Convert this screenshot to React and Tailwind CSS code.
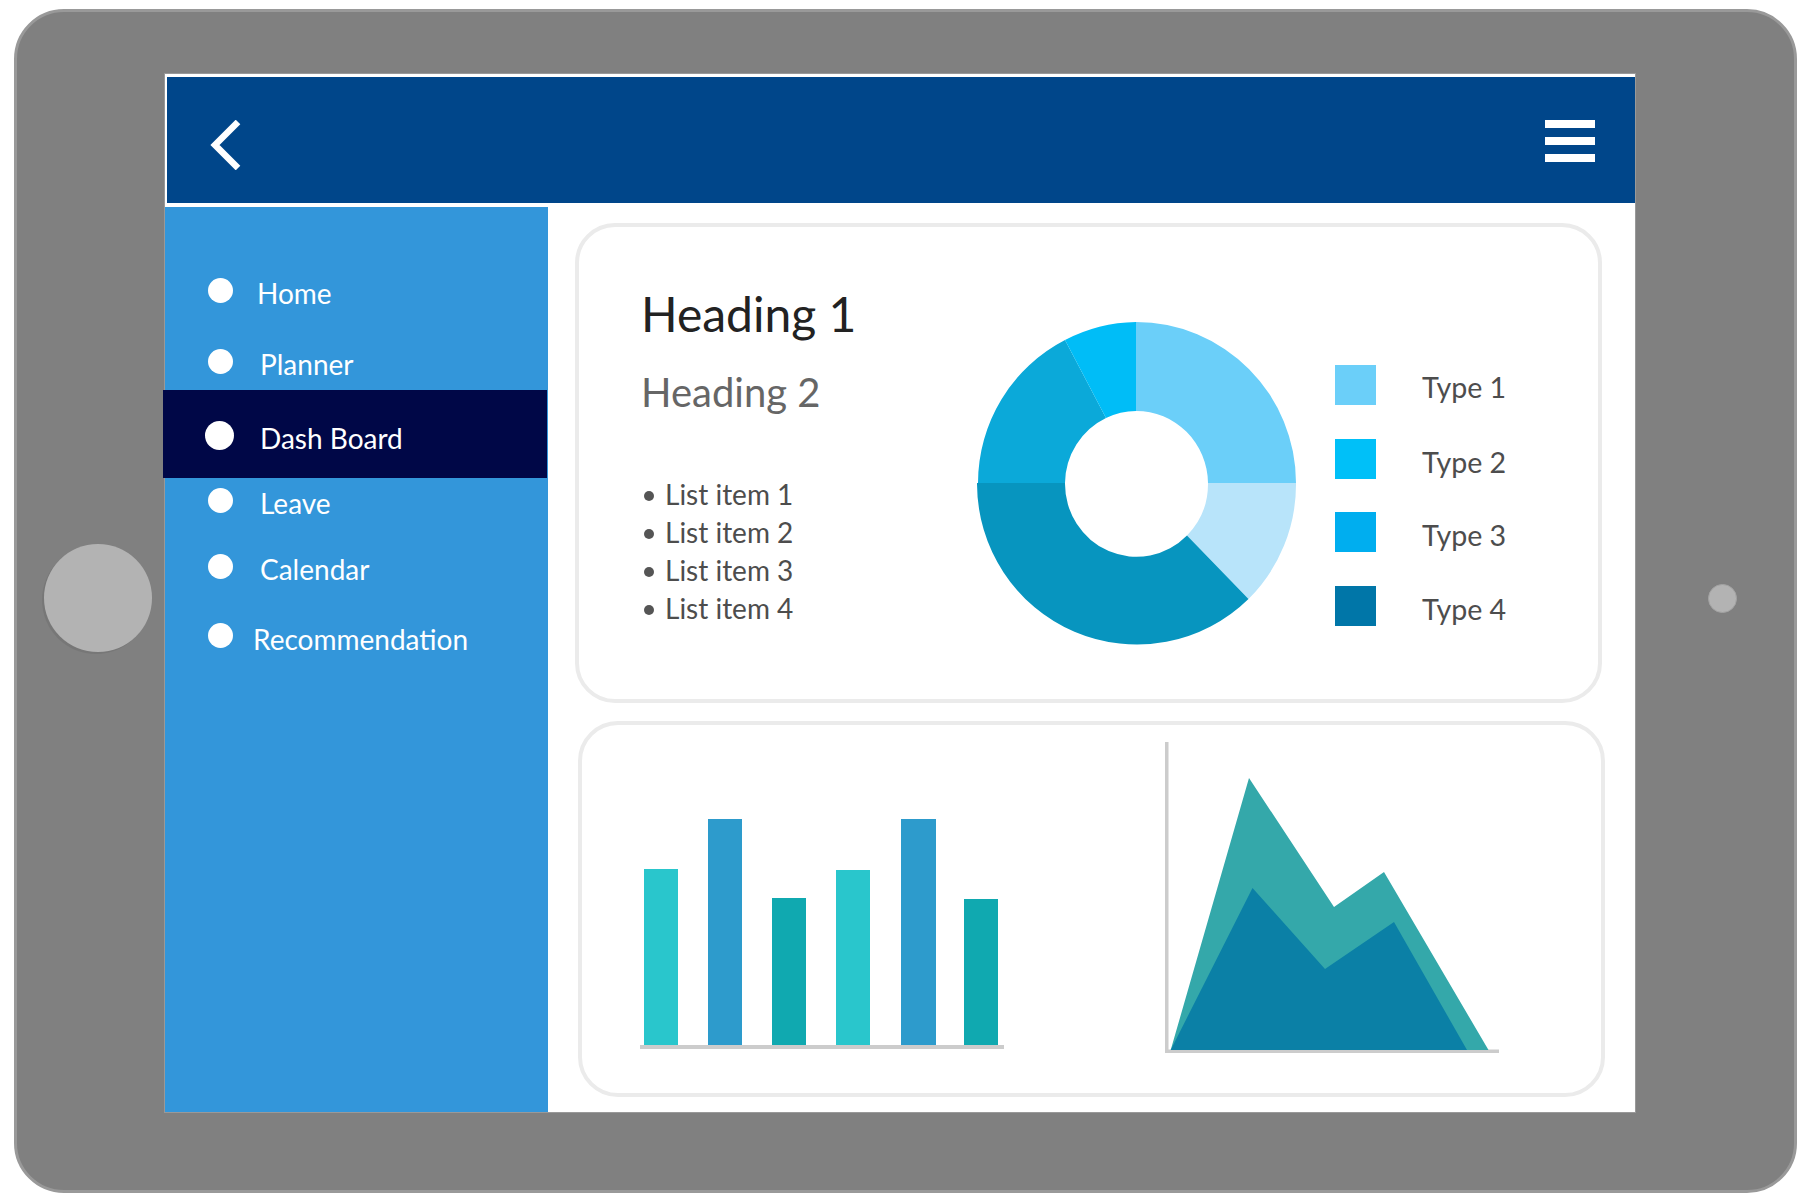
const font = { fontFamily: '"Lato", "Noto Sans", sans-serif' };

const navItems = [
  { label: 'Home', row: 'mt-[69px]', dot: 'mt-[2px]', text: 'ml-[24px]' },
  { label: 'Planner', row: 'mt-[37px]', dot: 'mt-[2px]', text: 'ml-[27px]' },
];
const navItemsAfter = [
  { label: 'Leave', row: 'mt-[8px]', dot: 'mt-[2px]', text: 'ml-[27px]' },
  { label: 'Calendar', row: 'mt-[32px]', dot: 'mt-[2px]', text: 'ml-[27px]' },
  { label: 'Recommendation', row: 'mt-[36px]', dot: 'mt-[1px]', text: 'ml-[20px]' },
];

function NavRow({ item }) {
  return (
    <div className={`${item.row} flex items-start pl-[43px] h-[34px]`}>
      <div className={`${item.dot} w-[25px] h-[25px] rounded-full bg-white shrink-0`} />
      <span className={`${item.text} text-[28px] leading-[34px] text-white`}>{item.label}</span>
    </div>
  );
}

function Sidebar() {
  return (
    <aside className="w-[383px] shrink-0 bg-[#3396da] mt-[4px]">
      {navItems.map((i) => <NavRow key={i.label} item={i} />)}
      <div className="mt-[9px] -ml-[2px] mr-[1px] h-[88px] bg-[#000747] pt-[31px] pl-[42px] flex items-start">
        <div className="w-[29px] h-[29px] rounded-full bg-white shrink-0" />
        <span className="ml-[26px] text-[28px] leading-[34px] text-white">Dash Board</span>
      </div>
      {navItemsAfter.map((i) => <NavRow key={i.label} item={i} />)}
    </aside>
  );
}

function Donut() {
  return (
    <svg className="mt-[94px] shrink-0" width="320" height="324" viewBox="977 321 320 324">
      <path fill="#6bcff9" d="M1136,322 A160 161 0 0 1 1296,483 L1208,483 A71.5 73 0 0 0 1136,411 Z" />
      <path fill="#b8e4fa" d="M1296,483 A160 161 0 0 1 1248.5,599 L1187,535.5 A71.5 73 0 0 0 1208,483 Z" />
      <path fill="#0795bf" d="M1248.5,599 A160 161 0 0 1 977,483 L1065,483 A71.5 73 0 0 0 1187,535.5 Z" />
      <path fill="#0ba9d9" d="M978,483 A160 161 0 0 1 1065,340 L1106,418 A71.5 73 0 0 0 1065,483 Z" />
      <path fill="#00bdf7" d="M1065,340 A160 161 0 0 1 1136,322 L1136,411 A71.5 73 0 0 0 1106,418 Z" />
    </svg>
  );
}

const legend = [
  { label: 'Type 1', color: 'bg-[#6bcff9]', row: 'mt-0', text: 'mt-[5px]' },
  { label: 'Type 2', color: 'bg-[#00c0f8]', row: 'mt-[34px]', text: 'mt-[6px]' },
  { label: 'Type 3', color: 'bg-[#00aeef]', row: 'mt-[33px]', text: 'mt-[6px]' },
  { label: 'Type 4', color: 'bg-[#0076a8]', row: 'mt-[34px]', text: 'mt-[6px]' },
];

function Legend() {
  return (
    <div className="ml-[38px] mt-[138px] flex flex-col">
      {legend.map((l) => (
        <div key={l.label} className={`${l.row} flex items-start h-[40px]`}>
          <div className={`w-[41px] h-[40px] ${l.color}`} />
          <span className={`ml-[46px] ${l.text} text-[28.6px] leading-[34px] text-[#4d4d4d]`}>{l.label}</span>
        </div>
      ))}
    </div>
  );
}

function SummaryCard() {
  return (
    <section className="w-[1027px] h-[480px] rounded-[40px] border-[4px] border-[#ebebeb] flex items-start pl-[60px]">
      <div className="w-[338px] shrink-0 mt-[59px] pl-[2px]">
        <h1 className="text-[48px] leading-[56px] text-[#222222]">Heading 1</h1>
        <h2 className="mt-[27px] text-[40px] leading-[46px] text-[#666666]">Heading 2</h2>
        <ul className="mt-[60px]">
          {[1, 2, 3, 4].map((n) => (
            <li key={n} className="flex items-start h-[38px] pl-[3px] text-[28px] leading-[38px] text-[#4d4d4d]">
              <span className="mt-[16px] w-[10px] h-[10px] rounded-full bg-[#555555] shrink-0" />
              <span className="ml-[11px]">List item {n}</span>
            </li>
          ))}
        </ul>
      </div>
      <Donut />
      <Legend />
    </section>
  );
}

const bars = [
  { x: 644, w: 34, y: 869, c: '#29c6cc' },
  { x: 708, w: 34, y: 819, c: '#2d9bcc' },
  { x: 772, w: 34, y: 898, c: '#10a9b0' },
  { x: 836, w: 34, y: 870, c: '#29c6cc' },
  { x: 901, w: 35, y: 819, c: '#2d9bcc' },
  { x: 964, w: 34, y: 899, c: '#10a9b0' },
];

function BarChart() {
  return (
    <svg className="mt-[94px] ml-[58px] shrink-0" width="364" height="230" viewBox="640 819 364 230">
      {bars.map((b) => (
        <rect key={b.x} x={b.x} y={b.y} width={b.w} height={1045 - b.y} fill={b.c} />
      ))}
      <rect x="640" y="1045" width="364" height="4" fill="#cccccc" />
    </svg>
  );
}

function AreaChart() {
  return (
    <svg className="mt-[17px] ml-[161px] shrink-0" width="335" height="311" viewBox="1165 742 335 311">
      <rect x="1165" y="742" width="3.5" height="311" fill="#cccccc" />
      <rect x="1165" y="1049.5" width="334" height="3.5" fill="#cccccc" />
      <polygon fill="#34a8aa" points="1170.7,1050 1249,778 1334,907 1384,872 1488.5,1050" />
      <polygon fill="#0b80a6" points="1170.7,1050 1252.5,888 1325,969 1394,922 1467,1050" />
    </svg>
  );
}

function ChartsCard() {
  return (
    <section className="mt-[18px] ml-[3px] w-[1027px] h-[376px] rounded-[40px] border-[4px] border-[#ebebeb] flex items-start">
      <BarChart />
      <AreaChart />
    </section>
  );
}

export default function App() {
  return (
    <div className="w-[1808px] h-[1200px] bg-white pt-[9px] pl-[14px]" style={font}>
      <div className="w-[1783px] h-[1184px] rounded-[50px] bg-[#808080] border-[3px] border-[#999999] flex items-center">
        <div className="ml-[27px] w-[108px] h-[108px] rounded-full bg-[#b3b3b3] shadow-[-2px_2px_0_#777777] shrink-0 mt-[-6px]" />
        <div className="ml-[12px] w-[1472px] h-[1040px] -mt-[16px] bg-white border border-[#999999] flex flex-col shrink-0">
          <header className="mt-[3px] ml-[2px] h-[126px] bg-[#00468a] flex items-center justify-between pl-[42px] pr-[40px] shrink-0">
            <svg className="mt-[10px]" width="32" height="50" viewBox="0 0 32 50" fill="none" stroke="white" strokeWidth="6.5">
              <polyline points="29,2 6,25 29,48" />
            </svg>
            <div className="flex flex-col gap-[9px] mt-[2px]">
              <div className="w-[50px] h-[8px] bg-white" />
              <div className="w-[50px] h-[8px] bg-white" />
              <div className="w-[50px] h-[8px] bg-white" />
            </div>
          </header>
          <div className="flex flex-1 min-h-0">
            <Sidebar />
            <main className="pl-[27px] pt-[20px]">
              <SummaryCard />
              <ChartsCard />
            </main>
          </div>
        </div>
        <div className="ml-[72px] w-[29px] h-[29px] rounded-full bg-[#b3b3b3] border border-[#a3a3a3] shrink-0 -mt-[6px]" />
      </div>
    </div>
  );
}
